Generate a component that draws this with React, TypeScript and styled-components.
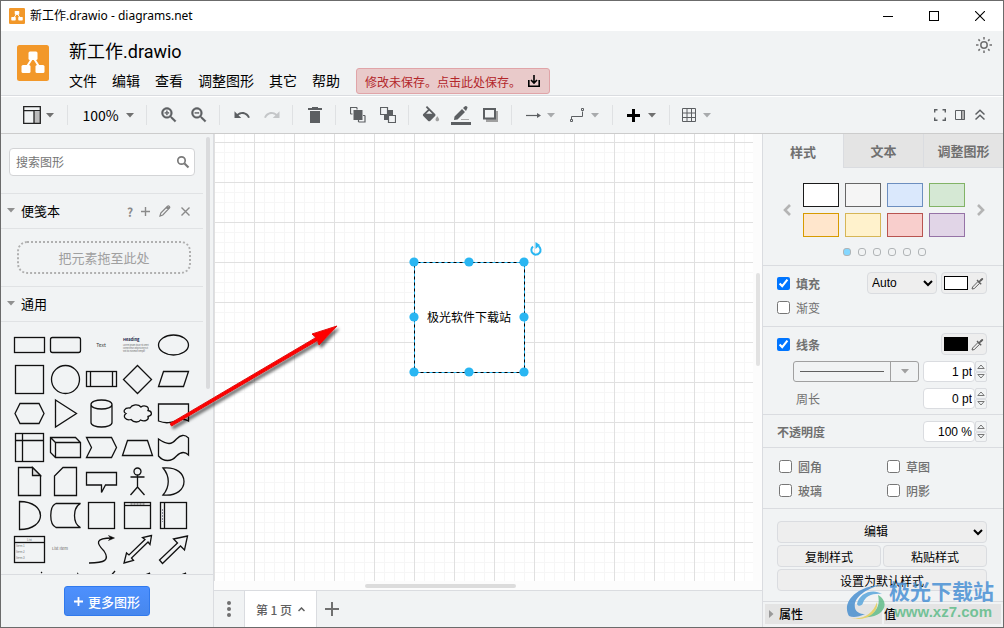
import React from "react";
import styled, { createGlobalStyle } from "styled-components";

const ui = `"Noto Sans CJK SC", "Noto Sans", sans-serif`;
const arial = `"Liberation Sans", "Noto Sans CJK SC", sans-serif`;
const bg = "#f1f3f4";
const line = "#dadce0";

const Global = createGlobalStyle`
  *, *::before, *::after { box-sizing: border-box; }
  body { margin: 0; font-family: ${ui}; font-size: 12px; color: #000; }
  button, input, select { font: inherit; color: inherit; margin: 0; }
  button { padding: 0; border: 0; background: none; display: flex; align-items: center; justify-content: center; }
  svg { display: block; flex: none; }
`;

const Window = styled.div`
  position: relative;
  display: flex;
  flex-direction: column;
  height: 100vh;
  border: 1px solid #6b6b6b;
  background: ${bg};
  overflow: hidden;
`;

const TitleBar = styled.div`
  flex: none;
  display: flex;
  align-items: center;
  height: 30px;
  padding-left: 8px;
  background: #fff;
`;
const TitleText = styled.span`
  flex: 1;
  padding-left: 5px;
  font-family: "Noto Sans", "Noto Sans CJK SC", sans-serif;
  font-size: 12px;
  line-height: 18px;
`;
const CaptionButton = styled.button`
  width: 46px;
  height: 30px;
`;

const Header = styled.header`
  flex: none;
  display: flex;
  align-items: flex-start;
  height: 65px;
  padding: 0 10px 0 16px;
  border-bottom: 1px solid ${line};
`;
const LogoBox = styled.div`
  margin: 14px 20px 0 0;
`;
const HeaderMain = styled.div`
  flex: 1;
`;
const DocTitle = styled.h1`
  margin: 8px 0 0;
  font-family: Roboto, "Noto Sans CJK SC", sans-serif;
  font-size: 18px;
  font-weight: 400;
  line-height: 26px;
`;
const MenuBar = styled.nav`
  display: flex;
  align-items: center;
  gap: 15px;
  margin-top: 3px;
`;
const MenuButton = styled.button`
  padding-bottom: 2px;
  font-size: 14px;
  line-height: 20px;
`;
const SaveBanner = styled.button`
  gap: 6px;
  height: 26px;
  margin-left: 1px;
  padding: 0 8px;
  border: 1px solid #e0a4a8;
  border-radius: 3px;
  background: #e9caca;
  color: #b3262a;
  font-size: 12px;
`;
const ThemeButton = styled.button`
  margin-top: 5px;
`;

const Toolbar = styled.div`
  flex: none;
  display: flex;
  align-items: center;
  height: 38px;
  padding-left: 10px;
  border-top: 1px solid #fff;
  border-bottom: 1px solid #ccc;
`;
const ToolGroup = styled.div<{ $last?: boolean }>`
  display: flex;
  height: 20px;
  padding: 0 5px 0 7px;
  align-items: center;
  border-right: ${(p) => (p.$last ? "0" : "1px solid #dfe1e3")};
`;
const ToolButton = styled.button`
  width: 30px;
  height: 30px;
`;
const DropButton = styled.button`
  width: 44px;
  height: 30px;
  justify-content: flex-start;
  padding-left: 5px;
  gap: 5px;
`;
const ZoomButton = styled.button`
  width: 66px;
  height: 30px;
  gap: 7px;
  font-size: 14px;
`;
const ToolEnd = styled.div`
  display: flex;
  margin-left: auto;
  padding-right: 13px;
`;
const SmallTool = styled.button`
  width: 20px;
  height: 20px;
`;

const Body = styled.div`
  flex: 1;
  min-height: 0;
  display: flex;
`;

const Sidebar = styled.aside`
  flex: none;
  display: flex;
  flex-direction: column;
  width: 213px;
  border-right: 1px solid ${line};
`;
const SideScroll = styled.div`
  flex: 1;
  min-height: 0;
  display: flex;
  overflow: hidden;
`;
const SideContent = styled.div`
  flex: 1;
`;
const SideTrack = styled.div`
  width: 10px;
  padding: 3px 3px 0;
`;
const SideThumb = styled.div`
  height: 252px;
  border-radius: 2px;
  background: #dadbdd;
`;
const SearchBox = styled.label`
  display: flex;
  align-items: center;
  height: 28px;
  margin: 14px 8px 17px;
  padding: 0 4px 0 6px;
  border: 1px solid #d3d4d6;
  border-radius: 4px;
  background: #fff;
`;
const SearchInput = styled.input`
  flex: 1;
  min-width: 0;
  padding: 0 0 2px;
  border: 0;
  outline: 0;
  font-size: 12px;
  background: none;
  &::placeholder { color: #757575; }
`;
const SectionHead = styled.div`
  display: flex;
  align-items: center;
  height: 36px;
  padding: 0 8px 0 6px;
  border-top: 1px solid #e0e2e4;
  border-bottom: 1px solid #e0e2e4;
`;
const SectionTitle = styled.button`
  flex: 1;
  justify-content: flex-start;
  gap: 6px;
  padding-bottom: 2px;
  font-size: 13px;
`;
const HeadAction = styled.button<{ $w: number }>`
  width: ${(p) => p.$w}px;
  height: 20px;
  color: #8a8a8a;
  font-size: 12px;
  font-weight: 700;
`;
const DropZone = styled.div`
  display: flex;
  align-items: center;
  justify-content: center;
  height: 33px;
  margin: 12px 12px 12px 16px;
  border: 2px dotted #b0b0b0;
  border-radius: 10px;
  color: #a0a0a0;
  font-size: 13px;
`;
const ShapeGrid = styled.div`
  display: grid;
  grid-template-columns: repeat(5, 36px);
  padding: 6px 0 0 10px;
`;
const ShapeButton = styled.button`
  height: 34px;
`;
const SideFooter = styled.div`
  flex: none;
  display: flex;
  justify-content: center;
  height: 53px;
  padding-top: 11px;
  border-top: 1px solid ${line};
`;
const MoreButton = styled.button`
  width: 86px;
  height: 30px;
  gap: 5px;
  border: 1px solid #3079ed;
  border-radius: 3px;
  background: linear-gradient(#4d90fe, #4787ed);
  color: #fff;
  font-size: 13px;
  font-weight: 500;
`;

const Workspace = styled.main`
  flex: 1;
  min-width: 0;
  display: flex;
  flex-direction: column;
`;
const CanvasArea = styled.div`
  flex: 1;
  min-height: 0;
  display: grid;
  grid-template-columns: 1fr 9px;
  grid-template-rows: 1fr 9px;
  background: #fcfcfc;
`;
const Canvas = styled.div`
  position: relative;
  background-color: #fff;
  background-image:
    linear-gradient(to right, #e0e0e0 1px, transparent 1px),
    linear-gradient(to bottom, #e0e0e0 1px, transparent 1px),
    linear-gradient(to right, #f6f6f6 1px, transparent 1px),
    linear-gradient(to bottom, #f6f6f6 1px, transparent 1px);
  background-size: 40px 40px, 40px 40px, 10px 10px, 10px 10px;
  background-position: 0 8px;
`;
const NodeBox = styled.div`
  position: absolute;
  left: 200px;
  top: 128px;
  display: flex;
  align-items: center;
  justify-content: center;
  width: 110px;
  height: 110px;
  padding-bottom: 2px;
  background: #fff;
  font-size: 12px;
`;
const NodeFrame = styled.svg`
  position: absolute;
  left: -6px;
  top: -20px;
`;
const VTrack = styled.div`
  display: flex;
  align-items: flex-start;
  justify-content: center;
  padding-top: 139px;
`;
const VThumb = styled.div`
  width: 4px;
  height: 93px;
  border-radius: 2px;
  background: #e2e2e2;
`;
const HTrack = styled.div`
  display: flex;
  align-items: center;
  padding-left: 28%;
`;
const HThumb = styled.div`
  width: 151px;
  height: 4px;
  border-radius: 2px;
  background: #dcdcdc;
`;
const PageBar = styled.div`
  flex: none;
  display: flex;
  height: 37px;
  border-top: 1px solid ${line};
`;
const PageMenu = styled.button`
  width: 31px;
  border-right: 1px solid ${line};
`;
const PageTab = styled.button`
  width: 72px;
  gap: 6px;
  border-right: 1px solid ${line};
  background: #fff;
  color: #606060;
  font-size: 12px;
  font-weight: 500;
`;
const PageAdd = styled.button`
  width: 30px;
`;

const Panel = styled.aside`
  flex: none;
  width: 241px;
  border-left: 1px solid ${line};
  color: #707070;
  overflow: hidden;
`;
const Tabs = styled.div`
  display: grid;
  grid-template-columns: repeat(3, 1fr);
  height: 34px;
`;
const Tab = styled.button<{ $active?: boolean }>`
  border-left: ${(p) => (p.$active ? "0" : `1px solid ${line}`)};
  border-bottom: ${(p) => (p.$active ? "0" : `1px solid ${line}`)};
  background: ${(p) => (p.$active ? bg : "#e4e4e4")};
  font-size: 13px;
  font-weight: 700;
`;
const Section = styled.section<{ $top?: number; $bottom?: number; $left?: number; $gap?: number }>`
  display: flex;
  flex-direction: column;
  gap: ${(p) => p.$gap ?? 6}px;
  padding: ${(p) => p.$top ?? 6}px 16px ${(p) => p.$bottom ?? 5}px ${(p) => p.$left ?? 14}px;
  border-bottom: 1px solid ${line};
`;
const StyleRow = styled.div`
  display: flex;
  align-items: center;
  justify-content: center;
  gap: 12px;
`;
const Swatches = styled.div`
  display: grid;
  grid-template-columns: repeat(4, 36px);
  gap: 6px;
`;
const Swatch = styled.button<{ $fill: string; $stroke: string }>`
  height: 24px;
  background: ${(p) => p.$fill};
  border: 1px solid ${(p) => p.$stroke};
`;
const Dots = styled.div`
  display: flex;
  justify-content: center;
  gap: 7px;
`;
const Dot = styled.button<{ $on?: boolean }>`
  width: 8px;
  height: 8px;
  border: 1px solid #b0b4b6;
  border-radius: 3px;
  background: ${(p) => (p.$on ? "#84d7ff" : "transparent")};
`;
const Row = styled.div<{ $h?: number }>`
  display: flex;
  align-items: center;
  gap: 4px;
  height: ${(p) => p.$h ?? 22}px;
`;
const CheckLabel = styled.label<{ $bold?: boolean }>`
  flex: 1;
  display: flex;
  align-items: center;
  gap: 6px;
  font-weight: ${(p) => (p.$bold ? 700 : "inherit")};
`;
const Check = styled.input`
  width: 13px;
  height: 13px;
`;
const RowLabel = styled.label<{ $bold?: boolean; $indent?: boolean }>`
  flex: 1;
  padding-left: ${(p) => (p.$indent ? 19 : 0)}px;
  font-weight: ${(p) => (p.$bold ? 700 : 400)};
`;
const Select = styled.select<{ $wide?: boolean }>`
  width: ${(p) => (p.$wide ? "100%" : "70px")};
  height: 22px;
  padding: 0;
  border: 1px solid ${line};
  border-radius: 4px;
  background-color: #eee;
  color: #000;
  font-family: ${arial};
  font-size: 12px;
  text-align-last: ${(p) => (p.$wide ? "center" : "left")};
`;
const ColorButton = styled.button`
  width: 46px;
  height: 22px;
  gap: 3px;
  border: 1px solid ${line};
  border-radius: 4px;
  background: #eee;
`;
const ColorChip = styled.span<{ $c: string }>`
  width: 24px;
  height: 14px;
  border: 1px solid #000;
  background: ${(p) => p.$c};
`;
const LineStyle = styled.button`
  width: 126px;
  height: 21px;
  margin-left: auto;
  border: 1px solid #a0a0a0;
  border-radius: 3px;
`;
const LineSample = styled.span`
  flex: 1;
  height: 1px;
  margin: 0 6px;
  background: #606060;
`;
const LineDrop = styled.span`
  display: flex;
  align-items: center;
  justify-content: center;
  width: 28px;
  height: 19px;
  border-left: 1px solid #a0a0a0;
`;
const Unit = styled.span`
  display: flex;
  width: 64px;
  height: 21px;
`;
const UnitInput = styled.input`
  flex: 1;
  min-width: 0;
  padding: 0 2px;
  border: 1px solid ${line};
  border-radius: 4px;
  background: #fff;
  color: #000;
  text-align: right;
  font-family: ${arial};
  font-size: 12px;
`;
const Steps = styled.span`
  display: flex;
  flex-direction: column;
  width: 12px;
`;
const Step = styled.button`
  flex: 1;
  border: 1px solid ${line};
  border-radius: 2px;
`;
const Options = styled.div`
  display: grid;
  grid-template-columns: 108px 1fr;
  grid-auto-rows: 24px;
  padding-left: 2px;
  font-weight: 500;
`;
const ActionRow = styled.div`
  display: flex;
  gap: 2px;
`;
const Action = styled.button`
  flex: 1;
  height: 22px;
  border: 1px solid ${line};
  border-radius: 4px;
  background: #eee;
  color: #000;
  font-size: 12px;
`;
const PropTable = styled.table`
  width: 100%;
  border-spacing: 2px;
  table-layout: fixed;
  color: #000;
`;
const PropHead = styled.th`
  height: 20px;
  padding: 0;
  background: #e4e4e4;
  text-align: left;
  font-size: 12px;
  line-height: 18px;
  font-weight: 500;
`;
const PropToggle = styled.button`
  gap: 5px;
  padding-left: 4px;
  font-weight: 500;
`;

const RedArrow = styled.svg`
  position: absolute;
  left: 160px;
  top: 315px;
  pointer-events: none;
`;
const Watermark = styled.div`
  position: absolute;
  right: 9px;
  bottom: 5px;
  display: flex;
  align-items: flex-end;
  pointer-events: none;
`;
const WaterText = styled.div`
  display: flex;
  flex-direction: column;
  align-items: flex-end;
  font-weight: 700;
`;
const WaterName = styled.span`
  color: rgba(72, 144, 212, 0.85);
  font-size: 21px;
  line-height: 24px;
`;
const WaterSite = styled.span`
  padding-right: 2px;
  color: rgba(84, 184, 130, 0.8);
  font-family: ${arial};
  font-size: 15px;
  line-height: 20px;
`;

const Caret = ({ c = "#707070" }: { c?: string }) => (
  <svg width="8" height="5" viewBox="0 0 8 5"><path d="M0 0h8L4 4.5z" fill={c} /></svg>
);

const Logo = ({ w, h }: { w: number; h: number }) => (
  <svg width={w} height={h} viewBox="0 0 32 36" preserveAspectRatio="none">
    <rect width="32" height="36" rx="2.5" fill="#f2982a" />
    <path d="M16 12L9 23M16 12l7 11" stroke="#fff" strokeWidth="2" />
    <rect x="11.5" y="6.500" width="9" height="8.500" rx="1.500" fill="#fff" />
    <rect x="4.500" y="20" width="9" height="8" rx="1.500" fill="#fff" />
    <rect x="18.500" y="20" width="9" height="8" rx="1.500" fill="#fff" />
  </svg>
);

const g = "#5c5f62";

const PencilIcon = () => (
  <svg width="12" height="12" viewBox="0 0 12 12" fill="none" stroke="#858585">
    <path d="M1 11l.8-3L8.500 1.300q1-.8 1.800 0 .9.900 0 1.900L3.800 10z M7.300 2.600l1.900 1.900" strokeWidth="1.200" />
    <path d="M8.300 2l1.600 1.600" strokeWidth="2" />
  </svg>
);
const Dropper = () => (
  <svg width="13" height="13" viewBox="0 0 13 13">
    <path d="M1 12l.6-2L7 4.500 8.700 6.200 3.200 11.600z" fill="none" stroke="#606060" />
    <path d="M6 3l4.200 4.200M8 5l2.500-2.500" stroke="#606060" strokeWidth="1.400" />
    <path d="M8.500 3.500L10.500 1.200q.9-.6 1.500.1.500.6-.1 1.400L9.700 4.800z" fill="#606060" />
  </svg>
);

const shapes: [string, React.ReactNode][] = [
  ["矩形", <rect x="3.500" y="9.500" width="30" height="15" />],
  ["圆角矩形", <rect x="3.500" y="9.500" width="30" height="15" rx="2" />],
  ["文本", <text x="18" y="19" fontSize="5" textAnchor="middle" fill="#333" stroke="none">Text</text>],
  ["文本框", <g stroke="none" fill="#666"><text x="4" y="13" fontSize="4" fontWeight="700" fill="#124">Heading</text><text x="4" y="18" fontSize="2">Lorem ipsum dolor sit amet</text><text x="4" y="21" fontSize="2">consectetur adipisicing elit</text><text x="4" y="24" fontSize="2">sed do eiusmod tempor</text></g>],
  ["椭圆", <ellipse cx="18.500" cy="17" rx="15" ry="10" />],
  ["正方形", <rect x="4.500" y="3.500" width="28" height="28" />],
  ["圆", <circle cx="18.500" cy="17.500" r="14" />],
  ["过程", <><rect x="3.500" y="9.500" width="30" height="15" /><path d="M7.500 9.500v15M29.500 9.500v15" /></>],
  ["菱形", <path d="M18.500 3.500l14 14-14 14-14-14z" />],
  ["平行四边形", <path d="M8.500 9.500h25l-5 15h-25z" />],
  ["六边形", <path d="M4 17.500l5-10h19l5 10-5 10H9z" />],
  ["三角形", <path d="M8.500 4l21 13.500-21 13.500z" />],
  ["圆柱体", <path d="M8 8.500c0-6 21-6 21 0v18c0 6-21 6-21 0zc0 6 21 6 21 0" />],
  ["云", <path d="M11 12c-6-.5-7.500 4-4 5.500-4 3 0 7.500 5 6 3 3.500 8 3 9.500.5 4 2 9 0 7.500-3.500 5-1 4-5.500 0-6 2-4-4-6-7-3.500-3-3.500-9-2.500-11 1z" />],
  ["文档", <path d="M3.500 8h30v17c-10-6-15 6-30 0z" />],
  ["内部存储", <><rect x="4.500" y="3.500" width="28" height="28" /><path d="M11.500 3.500v28M4.500 10.500h28" /></>],
  ["立方体", <path d="M3.500 7.500h25l5 5v15h-25l-5-5zl5 5h25M8.500 12.500v15" />],
  ["步骤", <path d="M3.500 7.500h25l5 10-5 10h-25l5-10z" />],
  ["梯形", <path d="M3.500 25.500l5-15h20l5 15z" />],
  ["磁带", <path d="M3.500 9c9 6 13 6 18 0 4-4 8-5 12-1v17c-4-4-8-3-12 1-5 6-13 6-18 0z" />],
  ["便笺", <><path d="M7.500 3.500h14l8 8v20h-22z" /><path d="M21.500 3.500v8h8z" fill="#ddd" /></>],
  ["卡片", <path d="M16 3.500h13.500v28h-22V12z" />],
  ["标注", <path d="M3.500 8.500h30V21H22.500L18.500 28.500V21h-15z" />],
  ["角色", <path d="M18.500 11.500v12M11.500 13h14M18.500 23l-7 8M18.500 23l7 8M22 7.500a3.500 3.500 0 1 1-7 0 3.500 3.500 0 0 1 7 0z" />],
  ["或", <path d="M8 4c28-3 28 30 0 27 7-8 7-19 0-27z" />],
  ["与", <path d="M8.500 3.500c28 0 28 28 0 28z" />],
  ["数据存储", <path d="M9 5.500h24.500c-8 4-8 20 0 24H9c-7-3-7-21 0-24z" />],
  ["容器", <rect x="5.500" y="4.500" width="26" height="26" />],
  ["标题容器", <><rect x="5.500" y="4.500" width="26" height="26" /><path d="M5.500 7.500h26" /><path d="M11.500 6h14" strokeWidth="1" strokeDasharray="2 1" stroke="#555" /></>],
  ["横向容器", <><rect x="5.500" y="4.500" width="26" height="26" /><path d="M9.500 4.500v26" /><path d="M7.500 11v13" stroke="#889" strokeWidth="1" strokeDasharray="2 1" /></>],
  ["列表", <><rect x="3.500" y="4.500" width="30" height="26" /><path d="M3.500 10.500h30" /><g stroke="none" fill="#777"><text x="16" y="9" fontSize="3">List</text><text x="5" y="15" fontSize="3">Item 1</text><text x="5" y="21" fontSize="3">Item 2</text><text x="5" y="27" fontSize="3">Item 3</text></g></>],
  ["列表项", <text x="5" y="18" fontSize="4" stroke="none" fill="#666">List Item</text>],
  ["曲线", <><path d="M6 31c16 0 21-3 15-12-8-8-9-13 8-13" /><path d="M25.500 3.500l6 2.500-6 2.500 2-2.500z" fill="#000" strokeWidth=".5" /></>],
  ["双向箭头", <path d="M32.500 3.500l-9 2 2.500 2L10 23l-2.500-2-2.500 10 9.500-2.500-2-2.500L29 10l2 2.500z" />],
  ["箭头", <path d="M32.500 4l-14 3 4 4-18 17 3 3.500 18-17.500 4 4z" />],
  ["虚线", <path d="M23 14l8-8" strokeDasharray="3 2" />],
  ["点线", <path d="M24 14l8-8" strokeDasharray="1 2" />],
  ["线", <path d="M26 12l6-7" />],
  ["双向连接", <path d="M26 12l5-5M26 9l4-1.500v4" />],
  ["单向连接", <path d="M26 12l5-5M26 9l4-1.500v4" />],
];

const swatches = [
  ["#ffffff", "#1a1a1a"], ["#f5f5f5", "#666666"], ["#dae8fc", "#6c8ebf"], ["#d5e8d4", "#82b366"],
  ["#ffe6cc", "#d79b00"], ["#fff2cc", "#d6b656"], ["#f8cecc", "#b85450"], ["#e1d5e7", "#9673a6"],
];

const UnitField = ({ id, value, label }: { id: string; value: string; label: string }) => (
  <Unit>
    <UnitInput id={id} defaultValue={value} aria-label={label} />
    <Steps>
      <Step aria-label="增加"><svg width="8" height="5" viewBox="0 0 8 5"><path d="M.8 4.500L4 1l3.200 3.500z" fill="none" stroke="#777" /></svg></Step>
      <Step aria-label="减少"><svg width="8" height="5" viewBox="0 0 8 5"><path d="M.8.5L4 4 7.200.5z" fill="none" stroke="#777" /></svg></Step>
    </Steps>
  </Unit>
);

const handles = [[6, 20], [61, 20], [116, 20], [6, 75], [116, 75], [6, 130], [61, 130], [116, 130]];

export default function App() {
  return (
    <Window>
      <Global />
      <TitleBar>
        <Logo w={16} h={16} />
        <TitleText>新工作.drawio - diagrams.net</TitleText>
        <CaptionButton aria-label="最小化"><svg width="10" height="10"><path d="M0 5.500h10" stroke="#000" /></svg></CaptionButton>
        <CaptionButton aria-label="最大化"><svg width="10" height="10"><rect x=".5" y=".5" width="9" height="9" fill="none" stroke="#000" /></svg></CaptionButton>
        <CaptionButton aria-label="关闭"><svg width="10" height="10"><path d="M0 0l10 10M10 0L0 10" stroke="#000" strokeWidth="1.100" /></svg></CaptionButton>
      </TitleBar>

      <Header>
        <LogoBox><Logo w={32} h={36} /></LogoBox>
        <HeaderMain>
          <DocTitle>新工作.drawio</DocTitle>
          <MenuBar>
            {["文件", "编辑", "查看", "调整图形", "其它", "帮助"].map((m) => <MenuButton key={m}>{m}</MenuButton>)}
            <SaveBanner>
              修改未保存。点击此处保存。
              <svg width="14" height="14" viewBox="0 0 14 14" fill="none" stroke="#000" strokeWidth="1.600">
                <path d="M1.800 6v6.200h10.400V6M7 1v7.500M4 6l3 3 3-3" />
              </svg>
            </SaveBanner>
          </MenuBar>
        </HeaderMain>
        <ThemeButton aria-label="主题">
          <svg width="18" height="18" viewBox="0 0 18 18" fill="none" stroke="#707070" strokeWidth="1.500">
            <circle cx="9" cy="9" r="3.200" />
            <path d="M9 1v2.500M9 14.500V17M1 9h2.500M14.500 9H17M3.400 3.400l1.500 1.500M13.100 13.100l1.500 1.500M3.400 14.600l1.500-1.500M13.100 4.900l1.500-1.500" />
          </svg>
        </ThemeButton>
      </Header>

      <Toolbar>
        <ToolGroup>
          <DropButton aria-label="视图">
            <svg width="18" height="18" viewBox="0 0 18 18"><path d="M11 6h6v11h-6z" fill="#bbb" /><path d="M.7.700h16.600v16.600H.7zM.7 4.700h16.600M11 4.700V17" fill="none" stroke="#222" strokeWidth="1.300" /></svg>
            <Caret />
          </DropButton>
        </ToolGroup>
        <ToolGroup><ZoomButton>100%<Caret /></ZoomButton></ToolGroup>
        <ToolGroup>
          {["M12 10h-2v2H9v-2H7V9h2V7h1v2h2z", "M7 9h5v1H7z"].map((d, i) => (
            <ToolButton key={d} aria-label={i ? "缩小" : "放大"}>
              <svg width="20" height="20" viewBox="0 0 24 24" fill={g}>
                <path stroke={g} strokeWidth=".5" d="M15.500 14h-.79l-.28-.27C15.410 12.590 16 11.110 16 9.500 16 5.910 13.090 3 9.500 3S3 5.910 3 9.500 5.910 16 9.500 16c1.610 0 3.090-.59 4.230-1.570l.27.28v.79l5 4.990L20.490 19l-4.990-5zm-6 0C7.010 14 5 11.990 5 9.500S7.010 5 9.500 5 14 7.010 14 9.500 11.990 14 9.500 14z" />
                <path d={d} stroke={g} strokeWidth=".6" />
              </svg>
            </ToolButton>
          ))}
        </ToolGroup>
        <ToolGroup>
          <ToolButton aria-label="撤销"><svg width="18" height="18" viewBox="0 0 24 24" fill={g}><path d="M12.500 8c-2.650 0-5.050.99-6.900 2.600L2 7v9h9l-3.620-3.620c1.390-1.160 3.160-1.880 5.120-1.880 3.540 0 6.550 2.310 7.600 5.500l2.370-.78C21.080 11.030 17.150 8 12.500 8z" /></svg></ToolButton>
          <ToolButton aria-label="重做"><svg width="18" height="18" viewBox="0 0 24 24" fill="#c4c6c8"><path d="M18.400 10.600C16.550 8.990 14.150 8 11.500 8c-4.650 0-8.580 3.030-9.960 7.220L3.900 16c1.050-3.190 4.050-5.500 7.600-5.500 1.950 0 3.730.72 5.120 1.880L13 16h9V7l-3.600 3.600z" /></svg></ToolButton>
        </ToolGroup>
        <ToolGroup>
          <ToolButton aria-label="删除"><svg width="14" height="16" viewBox="0 0 14 16" fill={g}><path d="M0 1h4V0h6v1h4v2H0zM2 4h10v12H2z" /></svg></ToolButton>
        </ToolGroup>
        <ToolGroup>
          <ToolButton aria-label="移至最前"><svg width="16" height="16" viewBox="0 0 16 16"><path d="M3.500 3h9v10h-9z" fill={g} /><path d="M.5 7V.5H7M15 8.500V15H8.500M.5 7h2M7 .5v2M15 8.500h-2M8.500 15v-2" fill="none" stroke={g} strokeWidth="1.200" /></svg></ToolButton>
          <ToolButton aria-label="移至最后"><svg width="16" height="16" viewBox="0 0 16 16"><path d="M4 3h9v10H4z" fill={g} /><path d="M.5.5h7v7h-7zM8.500 8.500h7v7h-7z" fill={bg} stroke={g} strokeWidth="1.200" /></svg></ToolButton>
        </ToolGroup>
        <ToolGroup>
          <ToolButton aria-label="填充颜色"><svg width="18" height="18" viewBox="2 0 20 20"><path fill={g} d="M16.560 8.940L7.620 0 6.210 1.410l2.380 2.380-5.150 5.150c-.59.59-.59 1.540 0 2.120l5.500 5.500c.29.29.68.44 1.060.44s.77-.15 1.060-.44l5.500-5.500c.59-.58.59-1.530 0-2.120zM6.500 8.500L10 5.210 13.500 8.500z" /><path fill="#a0a0a0" d="M19 11.500s-2 2.170-2 3.500c0 1.100.9 2 2 2s2-.9 2-2c0-1.330-2-3.500-2-3.500z" /></svg></ToolButton>
          <ToolButton aria-label="线条颜色"><svg width="20" height="20" viewBox="0 0 20 20"><path d="M10 14.500h8" stroke="#aaa" /><path d="M3 15l.5-3.500L11 4l3 3-7.500 7.500zM12 3l2-1.800q1-.6 2 .3 1 1 .2 2L15 6z" fill={g} /><path d="M0 17h20v3H0z" fill={g} /></svg></ToolButton>
          <ToolButton aria-label="阴影"><svg width="16" height="14" viewBox="0 0 16 14"><path d="M3 3h12v11H3z" fill="#a0a0a0" /><path d="M1 1h11v9.500H1z" fill={bg} stroke={g} strokeWidth="2" /></svg></ToolButton>
        </ToolGroup>
        <ToolGroup>
          <DropButton aria-label="连接"><svg width="18" height="18" viewBox="0 0 18 18"><path d="M2 9.500h12" stroke={g} strokeWidth="1.200" /><path d="M13 7l4 2.500-4 2.500z" fill={g} /></svg><Caret c="#a8aaac" /></DropButton>
          <DropButton aria-label="路径"><svg width="18" height="18" viewBox="0 0 18 18" fill="none" stroke={g}><path d="M3.500 13.500v-3h11v-5" /><path d="M2.500 13.500h2v2h-2zM13.500 2.500h2v2h-2z" /></svg><Caret c="#a8aaac" /></DropButton>
        </ToolGroup>
        <ToolGroup>
          <DropButton aria-label="插入"><svg width="18" height="18" viewBox="0 0 18 18"><path d="M8.500 3v13M2 9.500h13" stroke="#000" strokeWidth="3" /></svg><Caret /></DropButton>
        </ToolGroup>
        <ToolGroup $last>
          <DropButton aria-label="表格"><svg width="16" height="14" viewBox="0 0 16 14" fill="none" stroke={g}><path d="M.5.5h13v13H.5zM5 .5v13M9.500.5v13M.5 5h13M.5 9.500h13" /></svg><Caret c="#a8aaac" /></DropButton>
        </ToolGroup>
        <ToolEnd>
          <SmallTool aria-label="全屏"><svg width="12" height="12" viewBox="0 0 12 12" fill="none" stroke={g} strokeWidth="1.400"><path d="M.7 3.500V.7h2.800M8.500.7h2.800v2.800M11.300 8.500v2.800H8.500M3.500 11.300H.7V8.500" /></svg></SmallTool>
          <SmallTool aria-label="格式"><svg width="10" height="10" viewBox="0 0 10 10"><path d="M6 0h4v10H6z" fill="#b0b0b0" /><path d="M.5.5h9v9h-9zM6.500.5v9" fill="none" stroke={g} /></svg></SmallTool>
          <SmallTool aria-label="折叠"><svg width="10" height="12" viewBox="0 0 10 12" fill="none" stroke={g} strokeWidth="1.500"><path d="M.5 5.500L5 1.200l4.500 4.300M.5 10.500L5 6.200l4.500 4.300" /></svg></SmallTool>
        </ToolEnd>
      </Toolbar>

      <Body>
        <Sidebar>
          <SideScroll>
            <SideContent>
              <SearchBox>
                <SearchInput placeholder="搜索图形" aria-label="搜索图形" />
                <svg width="14" height="14" viewBox="0 0 14 14" fill="none" stroke="#7a7a7a"><circle cx="5.500" cy="5.500" r="3.700" strokeWidth="1.700" /><path d="M8.500 8.500l4 4" strokeWidth="2.200" /></svg>
              </SearchBox>
              <SectionHead>
                <SectionTitle><Caret c="#909090" />便笺本</SectionTitle>
                <HeadAction $w={10}>?</HeadAction>
                <HeadAction $w={20} aria-label="添加"><svg width="9" height="9"><path d="M4.500 0v9M0 4.500h9" stroke="#8a8a8a" strokeWidth="1.400" /></svg></HeadAction>
                <HeadAction $w={20} aria-label="编辑"><PencilIcon /></HeadAction>
                <HeadAction $w={20} aria-label="关闭"><svg width="9" height="9"><path d="M.5.5l8 8M8.500.5l-8 8" stroke="#8a8a8a" strokeWidth="1.400" /></svg></HeadAction>
              </SectionHead>
              <DropZone>把元素拖至此处</DropZone>
              <SectionHead>
                <SectionTitle><Caret c="#909090" />通用</SectionTitle>
              </SectionHead>
              <ShapeGrid>
                {shapes.map(([name, art]) => (
                  <ShapeButton key={name} aria-label={name}>
                    <svg width="36" height="34" viewBox="0 0 36 34" fill="none" stroke="#111" strokeWidth="1.300">{art}</svg>
                  </ShapeButton>
                ))}
              </ShapeGrid>
            </SideContent>
            <SideTrack><SideThumb /></SideTrack>
          </SideScroll>
          <SideFooter>
            <MoreButton>
              <svg width="9" height="9"><path d="M4.500 0v9M0 4.500h9" stroke="#fff" strokeWidth="1.800" /></svg>
              更多图形
            </MoreButton>
          </SideFooter>
        </Sidebar>

        <Workspace>
          <CanvasArea>
            <Canvas>
              <NodeBox>
                极光软件下载站
                <NodeFrame width="140" height="140" viewBox="0 0 140 140">
                  <rect x="6.500" y="20.500" width="110" height="110" fill="none" stroke="#000" />
                  <rect x="6.500" y="20.500" width="110" height="110" fill="none" stroke="#29b6f2" strokeDasharray="3 3" />
                  {handles.map(([x, y]) => <circle key={`${x}-${y}`} cx={x} cy={y} r="4.600" fill="#29b6f2" />)}
                  <path d="M130.500 4.200a4.600 4.600 0 1 1-5.500.3" fill="none" stroke="#29b6f2" strokeWidth="2" />
                  <path d="M127.500 0l4.500 3-4.500 4z" fill="#29b6f2" />
                </NodeFrame>
              </NodeBox>
            </Canvas>
            <VTrack><VThumb /></VTrack>
            <HTrack><HThumb /></HTrack>
          </CanvasArea>
          <PageBar>
            <PageMenu aria-label="页面"><svg width="4" height="16" fill="#707070"><circle cx="2" cy="2" r="2" /><circle cx="2" cy="8" r="2" /><circle cx="2" cy="14" r="2" /></svg></PageMenu>
            <PageTab>第 1 页<svg width="7" height="5" fill="none" stroke="#606060" strokeWidth="1.500"><path d="M.5 4l3-3 3 3" /></svg></PageTab>
            <PageAdd aria-label="添加页面"><svg width="14" height="14"><path d="M7 0v14M0 7h14" stroke="#707070" strokeWidth="2" /></svg></PageAdd>
          </PageBar>
        </Workspace>

        <Panel>
          <Tabs>
            <Tab $active>样式</Tab>
            <Tab>文本</Tab>
            <Tab>调整图形</Tab>
          </Tabs>
          <Section $top={15} $bottom={9} $left={18} $gap={11}>
            <StyleRow>
              <button aria-label="上一页"><svg width="8" height="12" fill="none" stroke="#b4b4b4" strokeWidth="2.600"><path d="M7 1L2 6l5 5" /></svg></button>
              <Swatches>
                {swatches.map(([f, s]) => <Swatch key={f} $fill={f} $stroke={s} aria-label={f} />)}
              </Swatches>
              <button aria-label="下一页"><svg width="8" height="12" fill="none" stroke="#b4b4b4" strokeWidth="2.600"><path d="M1 1l5 5-5 5" /></svg></button>
            </StyleRow>
            <Dots>{[0, 1, 2, 3, 4, 5].map((i) => <Dot key={i} $on={i === 0} aria-label={`第 ${i + 1} 组`} />)}</Dots>
          </Section>
          <Section $bottom={10} $gap={4}>
            <Row>
              <CheckLabel $bold><Check type="checkbox" defaultChecked />填充</CheckLabel>
              <Select aria-label="填充样式"><option>Auto</option></Select>
              <ColorButton aria-label="填充颜色"><ColorChip $c="#fff" /><Dropper /></ColorButton>
            </Row>
            <Row $h={18}>
              <CheckLabel><Check type="checkbox" />渐变</CheckLabel>
            </Row>
          </Section>
          <Section>
            <Row>
              <CheckLabel $bold><Check type="checkbox" defaultChecked />线条</CheckLabel>
              <ColorButton aria-label="线条颜色"><ColorChip $c="#000" /><Dropper /></ColorButton>
            </Row>
            <Row $h={21}>
              <LineStyle aria-label="线条样式"><LineSample /><LineDrop><Caret c="#a0a0a0" /></LineDrop></LineStyle>
              <UnitField id="width" value="1 pt" label="线宽" />
            </Row>
            <Row $h={21}>
              <RowLabel $indent htmlFor="perimeter">周长</RowLabel>
              <UnitField id="perimeter" value="0 pt" label="周长" />
            </Row>
          </Section>
          <Section>
            <Row $h={21}>
              <RowLabel $bold htmlFor="opacity">不透明度</RowLabel>
              <UnitField id="opacity" value="100 %" label="不透明度" />
            </Row>
          </Section>
          <Section $bottom={6}>
            <Options>
              {["圆角", "草图", "玻璃", "阴影"].map((o) => (
                <CheckLabel key={o}><Check type="checkbox" />{o}</CheckLabel>
              ))}
            </Options>
          </Section>
          <Section $top={12} $bottom={10} $gap={2}>
            <Select $wide aria-label="编辑"><option>编辑</option></Select>
            <ActionRow><Action>复制样式</Action><Action>粘贴样式</Action></ActionRow>
            <ActionRow><Action>设置为默认样式</Action></ActionRow>
          </Section>
          <PropTable>
            <thead>
              <tr>
                <PropHead><PropToggle><svg width="5" height="8"><path d="M0 0l4.500 4L0 8z" fill="#999" /></svg>属性</PropToggle></PropHead>
                <PropHead>值</PropHead>
              </tr>
            </thead>
          </PropTable>
        </Panel>
      </Body>

      <RedArrow width="190" height="120" viewBox="0 0 190 120">
        <defs>
          <filter id="arrowShadow" x="-10%" y="-10%" width="130%" height="130%">
            <feDropShadow dx="2" dy="3" stdDeviation="1.500" floodColor="#000" floodOpacity="0.550" />
          </filter>
        </defs>
        <path d="M9 107.500L155 21.500 151 18l25-8-18 19-1.500-4.500L10.500 110z" fill="#f00" filter="url(#arrowShadow)" stroke="#e01010" strokeWidth="1" />
      </RedArrow>

      <Watermark>
        <svg width="44" height="38" viewBox="0 0 44 38" opacity=".85">
          <path d="M4 32C-4 18 12 2 36 1 20 5 8 14 10 24c1 4 5 6 10 6-6 3-12 4-16 2z" fill="#4a90d0" />
          <path d="M12 20C14 9 28 4 37 10c-9-1-17 2-19 9-1 3-5 4-6 1z" fill="#5aa6dc" />
          <path d="M33 11c14 8 4 24-14 22 10-3 17-9 14-22z" fill="#62bd8a" />
          <path d="M6 34c12 2 22-4 26-16 2 10-10 20-26 16z" fill="#e6cf5a" />
        </svg>
        <WaterText>
          <WaterName>极光下载站</WaterName>
          <WaterSite>www.xz7.com</WaterSite>
        </WaterText>
      </Watermark>
    </Window>
  );
}
